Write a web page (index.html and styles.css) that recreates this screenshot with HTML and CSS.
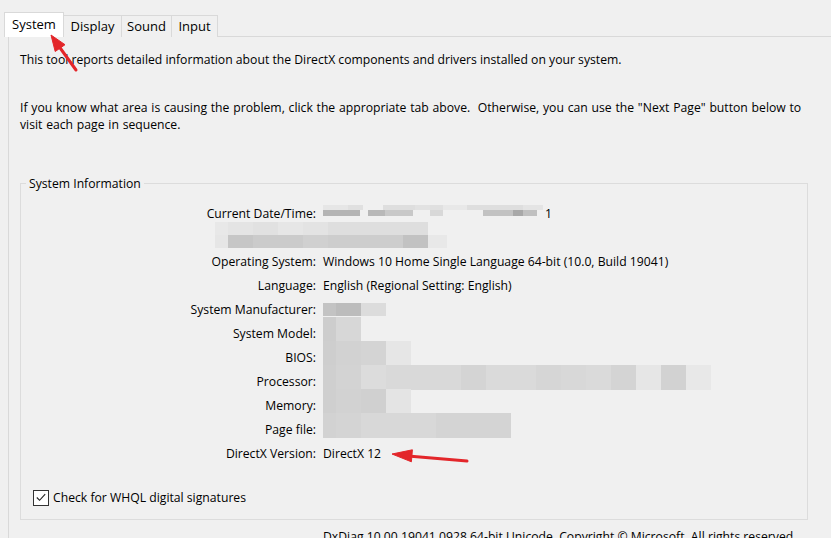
FILE: index.html
```html
<!DOCTYPE html>
<html>
<head>
<meta charset="utf-8">
<title>DirectX Diagnostic Tool</title>
<link rel="stylesheet" href="styles.css">
</head>
<body>
<div class="dialog">
  <div class="tabs">
    <div class="tab active">System</div>
    <div class="tab t-display">Display</div>
    <div class="tab t-sound">Sound</div>
    <div class="tab t-input">Input</div>
  </div>
  <div class="panel">
    <p class="intro">This tool reports detailed information about the DirectX components and drivers installed on your system.</p>
    <p class="intro p2">If you know what area is causing the problem, click the appropriate tab above.&nbsp; Otherwise, you can use the "Next Page" button below to<br>visit each page in sequence.</p>
    <fieldset class="group">
      <legend>System Information</legend>
      <div class="info">
        <div class="row"><span class="label">Current Date/Time:</span><span class="value"><span class="blur-date"></span><span class="one">1</span></span></div>
        <div class="row blurline"><span class="blur-top"></span><span class="blur-bottom"></span></div>
        <div class="row"><span class="label">Operating System:</span><span class="value">Windows 10 Home Single Language 64-bit (10.0, Build 19041)</span></div>
        <div class="row"><span class="label">Language:</span><span class="value">English (Regional Setting: English)</span></div>
        <div class="row"><span class="label">System Manufacturer:</span><span class="value"><span class="blur b-mfr"></span></span></div>
        <div class="row"><span class="label">System Model:</span><span class="value"><span class="blur b-model"></span></span></div>
        <div class="row"><span class="label">BIOS:</span><span class="value"><span class="blur b-bios"></span></span></div>
        <div class="row"><span class="label">Processor:</span><span class="value"><span class="blur b-cpu"></span></span></div>
        <div class="row"><span class="label">Memory:</span><span class="value"><span class="blur b-mem"></span></span></div>
        <div class="row"><span class="label">Page file:</span><span class="value"><span class="blur b-page"></span></span></div>
        <div class="row"><span class="label">DirectX Version:</span><span class="value">DirectX 12</span></div>
      </div>
      <div class="check">
        <span class="box"><svg width="15" height="15" viewBox="0 0 15 15"><polyline points="3,7.5 6,10.5 12,4" fill="none" stroke="#222" stroke-width="1.2"/></svg></span>
        <span>Check for WHQL digital signatures</span>
      </div>
    </fieldset>
    <div class="footer">DxDiag 10.00.19041.0928 64-bit Unicode&nbsp; Copyright © Microsoft. All rights reserved.</div>
  </div>
  <svg class="arrows" width="831" height="538" viewBox="0 0 831 538">
    <g fill="#e3262a" stroke="#e3262a">
      <line x1="76" y1="70" x2="58" y2="45" stroke-width="3" stroke-linecap="round"/>
      <polygon points="51,35 65,44.7 55.2,51.5" stroke-width="1" stroke-linejoin="round"/>
      <line x1="408" y1="456" x2="467" y2="461" stroke-width="3" stroke-linecap="round"/>
      <polygon points="392,454 412.4,449.8 411.4,461.8" stroke-width="1" stroke-linejoin="round"/>
    </g>
  </svg>
</div>
</body>
</html>
```
FILE: styles.css
```css
* { box-sizing: border-box; }
html, body {
  margin: 0;
  padding: 0;
  background: #f0f0f0;
}
body {
  width: 831px;
  height: 538px;
  overflow: hidden;
  font-family: "Open Sans", "Noto Sans", "Liberation Sans", sans-serif;
  font-size: 12.2px;
  color: #000;
}
.dialog {
  position: relative;
  width: 831px;
  height: 538px;
}
.tabs {
  display: flex;
  align-items: flex-end;
  height: 37px;
  padding: 0 0 0 4px;
  margin-bottom: -1px;
  position: relative;
  z-index: 2;
}
.tab {
  height: 22px;
  border-top: 1px solid #d9d9d9;
  border-right: 1px solid #d9d9d9;
  background: #f0f0f0;
  display: flex;
  align-items: center;
  justify-content: center;
  font-size: 13px;
  padding-bottom: 2px;
}
.tab.active {
  width: 60px;
  height: 25px;
  border-left: 1px solid #d9d9d9;
  background: #fff;
  padding-bottom: 3px;
}
.t-display { width: 58px; }
.t-sound { width: 50px; }
.t-input { width: 46px; }
.panel {
  margin-left: 8px;
  border-left: 1px solid #d9d9d9;
  border-top: 1px solid #d9d9d9;
  height: 502px;
  padding: 14px 0 0 11px;
  position: relative;
  z-index: 1;
}
.intro {
  margin: 0;
  line-height: 17px;
  white-space: nowrap;
}
.p2 {
  margin-top: 31px;
  word-spacing: 0.6px;
}
.group {
  margin: 42px 0 0 0;
  width: 788px;
  border: 1px solid #dcdcdc;
  padding: 9px 0 13px 5px;
  min-width: 0;
}
.group legend {
  padding: 0 3px;
  line-height: 17px;
}
.info {
  display: flex;
  flex-direction: column;
}
.row {
  display: flex;
  height: 24px;
  align-items: center;
}
.label {
  width: 290px;
  text-align: right;
  flex: none;
}
.value {
  margin-left: 7px;
  display: flex;
  align-items: center;
  align-self: stretch;
}
.blur {
  display: block;
  height: 25px;
  align-self: flex-start;
  margin-top: -4px;
}
.b-mfr {
  width: 63px;
  height: 13px;
  margin-top: 6px;
  background: linear-gradient(to right, #c3c3c3 0 13px, #bcbcbc 13px 38px, #dcdcdc 38px 63px);
}
.b-model {
  width: 38px;
  background: linear-gradient(to right, #cdcdcd 0 13px, #d7d7d7 13px 38px);
}
.b-bios {
  width: 88px;
  background: linear-gradient(to right, #cecece 0 13px, #d2d2d2 13px 38px, #d4d4d4 38px 63px, #e6e6e6 63px 88px);
}
.b-cpu {
  width: 388px;
  background: linear-gradient(to right, #cfcfcf 0 13px, #d3d3d3 13px 38px, #dcdcdc 38px 63px, #d9d9d9 63px 138px, #d4d4d4 138px 163px, #dadada 163px 213px, #d6d6d6 213px 238px, #d8d8d8 238px 263px, #dadada 263px 288px, #d4d4d4 288px 313px, #e6e6e6 313px 338px, #d2d2d2 338px 363px, #e8e8e8 363px 388px);
}
.b-mem {
  width: 88px;
  background: linear-gradient(to right, #cfcfcf 0 13px, #d2d2d2 13px 38px, #d0d0d0 38px 63px, #e4e4e4 63px 88px);
}
.b-page {
  width: 188px;
  background: linear-gradient(to right, #d2d2d2 0 13px, #d4d4d4 13px 38px, #d8d8d8 38px 113px, #d4d4d4 113px 188px);
}
.blur-date {
  display: block;
  width: 220px;
  height: 16px;
  background:
    linear-gradient(to right, #b4b4b4 0 37px, transparent 37px 45px, #b8b8b8 45px 62px, #c8c8c8 62px 90px, transparent 90px 107px, #d8d8d8 107px 120px, transparent 120px 160px, #c2c2c2 160px 190px, #a8a8a8 190px 200px, #c0c0c0 200px 214px, transparent 214px) 0 5px / 100% 6px no-repeat,
    linear-gradient(to right, #e6e6e6 0 25px, #e0e0e0 25px 40px, #f0f0f0 40px 60px, #dedede 60px 92px, #e2e2e2 92px 107px, #e0e0e0 107px 120px, #e8e8e8 120px 144px, #dedede 144px 200px, #e4e4e4 200px 220px) 0 0 / 100% 5px no-repeat;
}
.one { margin-left: 2px; }
.blurline {
  flex-direction: column;
  align-items: flex-start;
  padding-left: 189px;
}
.blur-top {
  display: block;
  margin-top: -3px;
  width: 213px;
  height: 13px;
  background: linear-gradient(to right, #e8e8e8 0 13px, #e4e4e4 13px 38px, #e1e1e1 38px 63px, #e6e6e6 63px 88px, #e3e3e3 88px 113px, #dedede 113px 213px);
}
.blur-bottom {
  display: block;
  width: 232px;
  height: 13px;
  background: linear-gradient(to right, #e6e6e6 0 13px, #c6c6c6 13px 38px, #cbcbcb 38px 88px, #d0d0d0 88px 113px, #cdcdcd 113px 188px, #c2c2c2 188px 213px, #e8e8e8 213px 232px);
}
.check {
  display: flex;
  align-items: center;
  height: 17px;
  margin-top: 24px;
  padding-left: 7px;
}
.box {
  width: 16px;
  height: 16px;
  border: 1px solid #333;
  background: #fff;
  display: flex;
  align-items: center;
  justify-content: center;
  margin-right: 4px;
}
.box svg { display: block; }
.footer {
  margin: 8px 0 0 303px;
  line-height: 17px;
  white-space: nowrap;
}
.arrows {
  position: absolute;
  left: 0;
  top: 0;
  z-index: 5;
  pointer-events: none;
}
```
